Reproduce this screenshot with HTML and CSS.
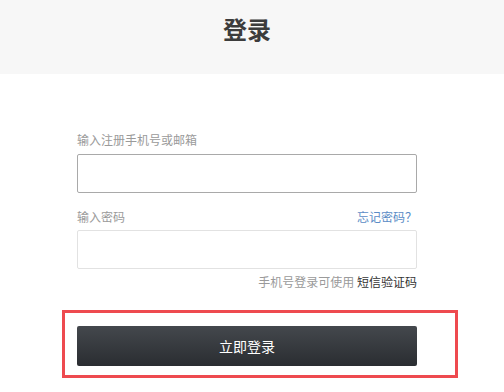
FILE: index.html
```html
<!DOCTYPE html>
<html lang="zh-CN">
<head>
<meta charset="utf-8">
<title>登录</title>
<link rel="stylesheet" href="styles.css">
</head>
<body>
<header class="header">
  <h1 class="title">登录</h1>
</header>
<main class="form">
  <div class="label-row">
    <span class="label">输入注册手机号或邮箱</span>
  </div>
  <input class="field field-active" type="text">
  <div class="label-row label-row-gap">
    <span class="label">输入密码</span>
    <a class="forgot" href="#">忘记密码？</a>
  </div>
  <input class="field" type="password">
  <div class="hint">手机号登录可使用 <span class="hint-strong">短信验证码</span></div>
</main>
<div class="highlight">
  <button class="submit" type="button">立即登录</button>
</div>
</body>
</html>
```

FILE: styles.css
```css
* { box-sizing: border-box; }
html, body {
  margin: 0;
  padding: 0;
  background: #ffffff;
  font-family: "Noto Sans CJK SC", "Noto Sans", sans-serif;
}
.header {
  height: 74px;
  background: #f7f7f7;
  display: flex;
  justify-content: center;
  padding-right: 10px;
}
.title {
  margin: 0;
  padding-top: 12px;
  font-size: 24px;
  line-height: 34px;
  font-weight: 700;
  color: #3c3c3c;
}
.form {
  width: 340px;
  margin: 55px 0 0 77px;
  display: flex;
  flex-direction: column;
}
.label-row {
  display: flex;
  justify-content: space-between;
  align-items: center;
  height: 20px;
  margin-bottom: 5px;
}
.label-row-gap {
  margin-top: 13px;
  margin-bottom: 4px;
}
.label {
  font-size: 12px;
  color: #9a9a9a;
}
.forgot {
  font-size: 12px;
  color: #5b8cc6;
  text-decoration: none;
}
.field {
  display: block;
  width: 340px;
  height: 39px;
  border: 1px solid #e2e2e2;
  border-radius: 2px;
  background: #fff;
  outline: none;
}
.field-active {
  border-color: #a9a9a9;
}
.hint {
  margin-top: 3px;
  height: 20px;
  line-height: 20px;
  text-align: right;
  font-size: 12px;
  color: #9a9a9a;
}
.hint-strong {
  color: #333;
}
.highlight {
  width: 396px;
  height: 68px;
  margin: 18px 0 0 62px;
  border: 3px solid #ee4a4f;
  padding: 13px 0 0 12px;
}
.submit {
  display: flex;
  align-items: center;
  justify-content: center;
  width: 340px;
  height: 40px;
  border: none;
  border-radius: 2px;
  background: linear-gradient(#44484d, #2a2d31);
  color: #ffffff;
  font-family: "Noto Sans CJK SC", "Noto Sans", sans-serif;
  font-size: 14px;
  padding: 0;
}
```
